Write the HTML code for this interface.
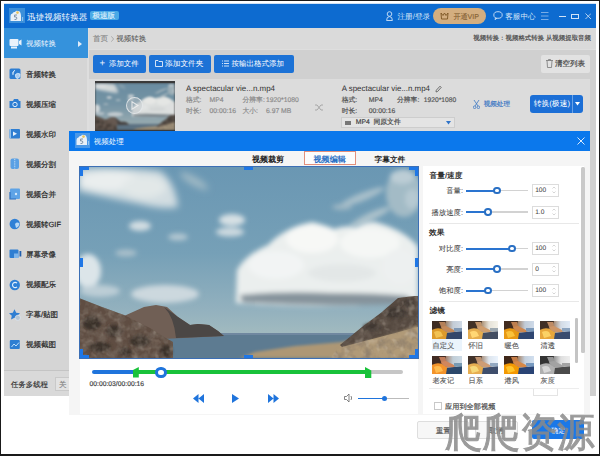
<!DOCTYPE html>
<html><head><meta charset="utf-8">
<style>
*{margin:0;padding:0;box-sizing:border-box}
html,body{width:600px;height:456px;overflow:hidden;background:#fff}
body{position:relative;font-family:"Liberation Sans",sans-serif;color:#333;text-rendering:geometricPrecision}
.a{position:absolute;white-space:nowrap;-webkit-text-stroke:0.18px currentColor}
.hd{background:#1f77e6;position:absolute}
</style></head><body>
<div class="a" style="left:0;top:0;width:600px;height:456px;border:1px solid #1a1a1a;border-bottom-width:2px"></div>

<div class="a" style="left:4px;top:2.8px;width:592px;height:1.2px;background:#d2e2f4;"></div>
<div class="a" style="left:4px;top:4px;width:592px;height:23.5px;background:#0d6bd0;"></div>
<div class="a" style="left:4px;top:27.5px;width:592px;height:1.5px;background:#c9d8ea;"></div>
<div class="a" style="left:4px;top:28px;width:84px;height:368px;background:#d5d5d5;"></div>
<div class="a" style="left:87px;top:28px;width:2px;height:368px;background:#dedede;"></div>
<div class="a" style="left:89px;top:28px;width:507px;height:21px;background:#dadada;"></div>
<div class="a" style="left:89px;top:49px;width:507px;height:1px;background:#dedede;"></div>
<div class="a" style="left:89px;top:50px;width:507px;height:346px;background:#d0d0d0;"></div>
<div class="a" style="left:89px;top:79px;width:501px;height:317px;background:#dcdcdc;"></div>

<div class="a" style="left:9px;top:8px;width:16px;height:14.5px;background:#3c8fd9"></div>
<svg class="a" style="left:10px;top:10px" width="14" height="12" viewBox="0 0 14 12"><path d="M0.5 11 V6 Q0.5 3.5 2.5 3.5 Q3 1.5 5 2 Q6 0.3 8 1 Q10 0.8 10.5 3 Q11 5 11 6 V11 Z" fill="#e8f0f8"/><circle cx="7.5" cy="2.6" r="1.3" fill="#e9c35a"/><path d="M4.5 5 H7 M4.7 5 L4.5 7 Q6.5 6.3 7 8 Q6.8 10 4.5 9.5" fill="none" stroke="#6a7f96" stroke-width="0.8"/><rect x="12.2" y="7" width="0.9" height="4" fill="#a9d0f0"/></svg>

<div class="a" style="left:27px;top:11.20px;font-size:8.64px;line-height:12px;color:#f4f8fd;-webkit-text-stroke:0">迅捷视频转换器</div>
<div class="a" style="left:90px;top:11px;width:28.5px;height:9px;background:#4aa9e6;border-radius:2px"></div>
<div class="a" style="left:92.5px;top:10.20px;font-size:7.5px;line-height:12px;color:#d8ecfa;">极速版</div>
<svg class="a" style="left:386px;top:11px" width="7" height="10" viewBox="0 0 7 10"><circle cx="3.5" cy="3" r="2.3" fill="none" stroke="#cfe2f7" stroke-width="0.9"/><path d="M0.6 9.5 Q0.6 5.6 3.5 5.6 Q6.4 5.6 6.4 9.5 Z" fill="none" stroke="#cfe2f7" stroke-width="0.9"/></svg>
<div class="a" style="left:397.4px;top:10.70px;font-size:7.7px;line-height:12px;color:#d5e6f8;-webkit-text-stroke:0">注册/登录</div>
<div class="a" style="left:433px;top:8px;width:53px;height:16px;background:#d3ae80;border-radius:8px"></div>
<svg class="a" style="left:440px;top:12px" width="9" height="8" viewBox="0 0 9 8"><path d="M1 1 L3 3.5 L4.5 1 L6 3.5 L8 1 L7.5 7 L1.5 7 Z" fill="none" stroke="#7a5522" stroke-width="0.9"/></svg>
<div class="a" style="left:453.4px;top:10.70px;font-size:7.1px;line-height:12px;color:#845f33;-webkit-text-stroke:0.1px #845f33">开通VIP</div>
<svg class="a" style="left:493px;top:11px" width="10" height="9" viewBox="0 0 10 9"><ellipse cx="5" cy="4" rx="4.2" ry="3.3" fill="none" stroke="#cfe2f7" stroke-width="0.9"/><path d="M2.5 7 L2 8.6 L4 7.2" fill="none" stroke="#cfe2f7" stroke-width="0.9"/></svg>
<div class="a" style="left:505.3px;top:10.70px;font-size:7.55px;line-height:12px;color:#d5e6f8;-webkit-text-stroke:0">客服中心</div>
<svg class="a" style="left:541px;top:12px" width="8" height="8" viewBox="0 0 8 8"><path d="M0 0.5 H7.5 M0 4 H7.5 M0 7.5 H7.5" stroke="#a9c9ef" stroke-width="0.7"/></svg>
<div class="a" style="left:558.5px;top:16px;width:7.5px;height:1px;background:#cfe2f7;"></div>
<div class="a" style="left:571px;top:14px;width:8px;height:5px;border:1px solid #cfe2f7"></div>
<svg class="a" style="left:584.5px;top:13px" width="6.5" height="6.5" viewBox="0 0 7 7"><path d="M0.5 0.5 L6.5 6.5 M6.5 0.5 L0.5 6.5" stroke="#cfe2f7" stroke-width="0.9"/></svg>
<div class="a" style="left:4px;top:27.5px;width:83.5px;height:30.5px;background:#3592dc;"></div>
<svg class="a" style="left:9px;top:38px" width="13" height="11" viewBox="0 0 13 11"><rect x="0.5" y="1" width="9" height="7" rx="1" fill="#eaf2fb"/><path d="M10 3 L12.5 1.5 L12.5 7.5 L10 6 Z" fill="#eaf2fb"/><rect x="2" y="8.5" width="6" height="2" fill="#eaf2fb"/></svg>
<div class="a" style="left:26px;top:38.45px;font-size:7.5px;line-height:12px;color:#f2f7fc;-webkit-text-stroke:0">视频转换</div>
<svg class="a" style="left:78px;top:40.5px" width="4" height="6" viewBox="0 0 4 6"><path d="M0 0 L4 3 L0 6 Z" fill="#e0ecf9"/></svg>
<svg class="a" style="left:9px;top:67.85px" width="13" height="12" viewBox="0 0 13 12"><rect x="0.5" y="0.5" width="11" height="10.5" rx="1.5" fill="#2e7ed2"/><path d="M6 2 Q2.5 4 4 7 M6.5 6.5 Q8.5 4.5 11 6 Q11.5 9 9 10.5 Q6.5 10.5 6.5 8 Z" fill="#a9cdf2" stroke="#d8ebfb" stroke-width="0.8"/></svg>
<div class="a" style="left:26px;top:68.55px;font-size:7.5px;line-height:12px;color:#262626;-webkit-text-stroke:0.2px #262626">音频转换</div>
<svg class="a" style="left:9px;top:97.95px" width="13" height="12" viewBox="0 0 13 12"><path d="M0.5 3 H4 L5 1 H9 L10 3 H11.5 V10 H0.5 Z" fill="#2e7ed2"/><circle cx="6" cy="6.5" r="2.2" fill="none" stroke="#e0eefb" stroke-width="1"/></svg>
<div class="a" style="left:26px;top:98.65px;font-size:7.5px;line-height:12px;color:#262626;-webkit-text-stroke:0.2px #262626">视频压缩</div>
<svg class="a" style="left:9px;top:128.05px" width="13" height="12" viewBox="0 0 13 12"><rect x="0.5" y="1" width="10.5" height="9.5" rx="1" fill="#2e7ed2"/><path d="M4 3.5 L8 5.75 L4 8 Z" fill="#e6f1fc"/><rect x="0.5" y="1" width="1.5" height="9.5" fill="#8ec0ee"/></svg>
<div class="a" style="left:26px;top:128.75px;font-size:7.5px;line-height:12px;color:#262626;-webkit-text-stroke:0.2px #262626">视频水印</div>
<svg class="a" style="left:9px;top:158.15px" width="13" height="12" viewBox="0 0 13 12"><rect x="1.5" y="0.5" width="8.5" height="10.5" rx="2" fill="#5aa0e4"/><path d="M5.75 1 V10.5" stroke="#e6f1fc" stroke-width="0.8" stroke-dasharray="1.2 1"/></svg>
<div class="a" style="left:26px;top:158.85px;font-size:7.5px;line-height:12px;color:#262626;-webkit-text-stroke:0.2px #262626">视频分割</div>
<svg class="a" style="left:9px;top:188.25px" width="13" height="12" viewBox="0 0 13 12"><rect x="1" y="0.5" width="10" height="10.5" rx="1" fill="#5ea3e6"/><path d="M1 4 V11 H7" fill="none" stroke="#2a6fc0" stroke-width="1.2"/><circle cx="7" cy="6" r="1.2" fill="#d6e9fb"/></svg>
<div class="a" style="left:26px;top:188.95px;font-size:7.5px;line-height:12px;color:#262626;-webkit-text-stroke:0.2px #262626">视频合并</div>
<svg class="a" style="left:9px;top:218.35px" width="13" height="12" viewBox="0 0 13 12"><circle cx="5.75" cy="6" r="5.2" fill="#2f80d6"/><path d="M6 6 Q8 3.5 10.5 5.5 Q10 9 7 10 Z" fill="#b7d8f6"/></svg>
<div class="a" style="left:26px;top:219.05px;font-size:7.5px;line-height:12px;color:#262626;-webkit-text-stroke:0.2px #262626">视频转GIF</div>
<svg class="a" style="left:9px;top:248.45px" width="13" height="12" viewBox="0 0 13 12"><rect x="0.5" y="1.5" width="9" height="8.5" rx="1" fill="#2e7ed2"/><rect x="10.5" y="3" width="1.8" height="5.5" fill="#1f5fae"/><rect x="5" y="5.5" width="4.5" height="4.5" fill="#7fb6ec"/></svg>
<div class="a" style="left:26px;top:249.15px;font-size:7.5px;line-height:12px;color:#262626;-webkit-text-stroke:0.2px #262626">屏幕录像</div>
<svg class="a" style="left:9px;top:278.55px" width="13" height="12" viewBox="0 0 13 12"><circle cx="5.75" cy="6" r="5.2" fill="#2f80d6"/><path d="M8 4.2 A2.6 2.6 0 1 0 8 7.8" fill="none" stroke="#e4f0fc" stroke-width="1.1"/></svg>
<div class="a" style="left:26px;top:279.25px;font-size:7.5px;line-height:12px;color:#262626;-webkit-text-stroke:0.2px #262626">视频配乐</div>
<svg class="a" style="left:9px;top:308.65px" width="13" height="12" viewBox="0 0 13 12"><path d="M5.5 0.3 L7.2 3.8 L11 4.2 L8.2 6.8 L9 10.6 L5.5 8.7 L2 10.6 L2.8 6.8 L0 4.2 L3.8 3.8 Z" fill="#2e7ed2"/><circle cx="8.8" cy="8.8" r="2.6" fill="#b4c6d6" stroke="#e6eef6" stroke-width="0.6"/></svg>
<div class="a" style="left:26px;top:309.35px;font-size:7.5px;line-height:12px;color:#262626;-webkit-text-stroke:0.2px #262626">字幕/贴图</div>
<svg class="a" style="left:9px;top:338.75px" width="13" height="12" viewBox="0 0 13 12"><rect x="0.8" y="1" width="10" height="9" rx="1" fill="#2e7ed2"/><path d="M2.5 8 L5 5 L7 7 L10 3.5" fill="none" stroke="#bfe0fb" stroke-width="1"/></svg>
<div class="a" style="left:26px;top:339.45px;font-size:7.5px;line-height:12px;color:#262626;-webkit-text-stroke:0.2px #262626">视频截图</div>
<div class="a" style="left:4px;top:371px;width:83px;height:25px;background:#d9d9d9;"></div>
<div class="a" style="left:4px;top:370px;width:83px;height:1px;background:#c4c4c4;"></div>
<div class="a" style="left:11px;top:378.70px;font-size:7.4px;line-height:12px;color:#333;-webkit-text-stroke:0.15px #333">任务多线程</div>
<div class="a" style="left:55px;top:377px;width:30px;height:14px;background:#e2e2e2;border:1px solid #c9c9c9"></div>
<div class="a" style="left:59px;top:378.70px;font-size:7.4px;line-height:12px;color:#888;">关</div>
<div class="a" style="left:93px;top:33.20px;font-size:7.5px;line-height:12px;color:#8a8a8a;">首页</div>
<svg class="a" style="left:110.5px;top:35.5px" width="3" height="6" viewBox="0 0 3 6"><path d="M0.3 0.3 L2.6 3 L0.3 5.7" fill="none" stroke="#999" stroke-width="0.7"/></svg>
<div class="a" style="left:116.25px;top:33.20px;font-size:7.5px;line-height:12px;color:#555;-webkit-text-stroke:0.05px #555">视频转换</div>
<div class="a" style="right:9px;top:33.45px;font-size:6.45px;line-height:12px;color:#444;">视频转换：视频格式转换 从视频提取音频</div>
<div class="a" style="left:93px;top:54.5px;width:53px;height:18.5px;background:#1c72d6;border-radius:2px"></div>
<div class="a" style="left:99.5px;top:57.90px;font-size:9.5px;line-height:12px;color:#eef5fd;-webkit-text-stroke:0">+</div>
<div class="a" style="left:109px;top:58.45px;font-size:7.4px;line-height:12px;color:#fff;-webkit-text-stroke:0">添加文件</div>
<div class="a" style="left:149.25px;top:54.5px;width:61.25px;height:18.5px;background:#1c72d6;border-radius:2px"></div>
<svg class="a" style="left:155px;top:60px" width="8" height="7" viewBox="0 0 8 7"><path d="M0.5 0.5 H3 L4 1.5 H7.5 V6.5 H0.5 Z" fill="none" stroke="#fff" stroke-width="0.8"/></svg>
<div class="a" style="left:165px;top:58.45px;font-size:7.7px;line-height:12px;color:#fff;-webkit-text-stroke:0">添加文件夹</div>
<div class="a" style="left:214px;top:54.5px;width:79.5px;height:18.5px;background:#1c72d6;border-radius:2px"></div>
<svg class="a" style="left:222px;top:60px" width="7" height="7" viewBox="0 0 7 7"><path d="M0 1 H1 M2 1 H7 M0 3.5 H1 M2 3.5 H7 M0 6 H1 M2 6 H7" stroke="#fff" stroke-width="0.8"/></svg>
<div class="a" style="left:231.5px;top:58.45px;font-size:7.5px;line-height:12px;color:#fff;-webkit-text-stroke:0">按输出格式添加</div>
<div class="a" style="left:541px;top:55px;width:49px;height:17.5px;background:#e2e2e2;border-radius:2px"></div>
<svg class="a" style="left:546px;top:59px" width="7" height="9" viewBox="0 0 7 9"><path d="M0 1.5 H7 M2.5 1.5 V0.5 H4.5 V1.5 M1 1.5 L1.5 8.5 H5.5 L6 1.5" fill="none" stroke="#777" stroke-width="0.8"/></svg>
<div class="a" style="left:555px;top:58.45px;font-size:7.5px;line-height:12px;color:#444;">清空列表</div>
<div class="a" style="left:95px;top:81px;width:80px;height:50px;background:#3a3a3a;"></div>
<div class="a" style="left:95px;top:83px;width:80px;height:47px;overflow:hidden"><div style="position:absolute;left:0;top:0;width:80px;height:47px;filter:saturate(.8) brightness(.93) blur(0.8px)"><svg style="position:absolute;left:0;top:0" width="80" height="47" preserveAspectRatio="none" viewBox="0 0 338 191">
<defs>
<linearGradient id="sky2" x1="0" y1="0" x2="0" y2="1">
<stop offset="0" stop-color="#6a97b3"/><stop offset="0.45" stop-color="#76a0b7"/><stop offset="0.75" stop-color="#93b1be"/><stop offset="0.87" stop-color="#a1babf"/><stop offset="1" stop-color="#a1babf"/>
</linearGradient>
<filter id="tb3" x="-30%" y="-30%" width="160%" height="160%"><feGaussianBlur stdDeviation="2.5"/></filter>
<filter id="tb2" x="-30%" y="-30%" width="160%" height="160%"><feGaussianBlur stdDeviation="1.4"/></filter>
<filter id="tb1" x="-30%" y="-30%" width="160%" height="160%"><feGaussianBlur stdDeviation="0.7"/></filter>
<filter id="trough" x="0" y="0" width="100%" height="100%"><feTurbulence type="fractalNoise" baseFrequency="0.11" numOctaves="3" seed="4"/><feColorMatrix values="0 0 0 0 0.2  0 0 0 0 0.16  0 0 0 0 0.13  0 0 0 -2.2 1.35"/></filter>
<filter id="trough2" x="0" y="0" width="100%" height="100%"><feTurbulence type="fractalNoise" baseFrequency="0.14" numOctaves="2" seed="9"/><feColorMatrix values="0 0 0 0 0.75  0 0 0 0 0.68  0 0 0 0 0.58  0 0 0 -2.5 1.2"/></filter>
<clipPath id="tcliffclip"><path d="M-1 131 L22 140 L44 148 L70 161 L84 170 L93 175 L93 191 L-1 191 Z"/></clipPath>
<clipPath id="thillclip"><path d="M250 191 L260 178 L282 160 L302 145 L322 130 L338 129 L338 191 Z"/></clipPath>
</defs>
<rect width="338" height="191" fill="url(#sky2)"/>
<!-- top-left cloud -->
<filter id="tb4" x="-30%" y="-30%" width="160%" height="160%"><feGaussianBlur stdDeviation="3.5"/></filter>
<g filter="url(#tb4)">
<path d="M-2 1 Q40 -1 80 4 Q95 14 98 40 Q84 43 60 37 Q30 31 -2 24 Z" fill="#d2dde1"/>
<ellipse cx="30" cy="14" rx="32" ry="10" fill="#eaeeee"/>
<ellipse cx="64" cy="20" rx="22" ry="11" fill="#e2e8e8"/>
<ellipse cx="114" cy="14" rx="16" ry="4" transform="rotate(30 114 14)" fill="#a3bbc6"/>
</g>
<!-- small clouds -->
<g filter="url(#tb3)">
<ellipse cx="60" cy="59" rx="11" ry="5" fill="#d2dde2"/>
<ellipse cx="152" cy="53" rx="13" ry="6" fill="#d6e0e4"/>
<ellipse cx="150" cy="65" rx="14" ry="4.5" fill="#cddae0"/>
<ellipse cx="98" cy="70" rx="10" ry="3.5" fill="#b4c8d2"/>
<ellipse cx="46" cy="86" rx="11" ry="3.5" fill="#aac0cb"/>
</g>
<!-- top-right wisps -->
<g filter="url(#tb3)">
<ellipse cx="324" cy="26" rx="18" ry="24" fill="#a3bbc6"/>
<ellipse cx="322" cy="10" rx="12" ry="7" fill="#bccdd5"/>
<ellipse cx="332" cy="32" rx="7" ry="10" fill="#b6c9d2"/>
<ellipse cx="282" cy="30" rx="24" ry="4" transform="rotate(-22 282 30)" fill="#a8bfca"/>
<ellipse cx="290" cy="50" rx="22" ry="4" transform="rotate(-25 290 50)" fill="#abc1cb"/>
<ellipse cx="262" cy="40" rx="10" ry="3" fill="#9fb8c4"/>
</g>
<!-- big cloud -->
<g filter="url(#tb3)">
<path d="M156 136 L157 103 Q165 88 188 78 Q205 60 232 55 Q245 58 254 62 Q265 58 276 60 Q290 52 299 56 Q320 62 334 75 L338 80 L338 132 Q300 139 250 139 Q200 139 156 136 Z" fill="#ebefee"/>
<ellipse cx="232" cy="72" rx="26" ry="14" fill="#f7f8f6"/>
<ellipse cx="290" cy="76" rx="30" ry="15" fill="#f5f7f5"/>
<ellipse cx="196" cy="98" rx="28" ry="14" fill="#f2f4f4"/>
<ellipse cx="320" cy="100" rx="18" ry="18" fill="#edf0f0"/>
<ellipse cx="262" cy="106" rx="34" ry="9" fill="#e3e7e7"/>
<path d="M160 128 Q200 124 250 126 Q300 126 328 129 L332 136 Q280 139 240 138 Q190 137 162 135 Z" fill="#85939b"/>
</g>
<!-- left clouds -->
<g filter="url(#tb3)">
<ellipse cx="8" cy="104" rx="13" ry="17" fill="#dce5e9"/>
<ellipse cx="85" cy="127" rx="34" ry="9" fill="#ccd8de"/>
<ellipse cx="20" cy="124" rx="20" ry="6" fill="#bccdd6"/>
</g>
<!-- sea -->
<rect x="0" y="166.5" width="338" height="25" fill="#5d7b91"/>
<rect x="0" y="166" width="338" height="2" fill="#7088a0" filter="url(#tb1)"/>
<!-- ridge -->
<path d="M20 165 L44 149 L64 140 L76 138 L87 140 L98 150 L110 158 L118 157 L129 158 L138 164 L144 169 L20 175 Z" fill="#6f5e54" filter="url(#tb1)"/>
<path d="M84 140 L98 150 L110 158 L118 157 L129 158 L138 164 L144 169 L96 171 Q94 150 84 140 Z" fill="#4b4644" filter="url(#tb1)"/>
<!-- grass bottom right -->
<path d="M160 191 L175 185 L215 179 L262 175 L300 165 L338 156 L338 191 Z" fill="#ad9775" filter="url(#tb2)"/>
<!-- right hill -->
<path d="M260 178 L282 160 L302 145 L318 131 L335 129 L338 129 L338 160 L300 170 L262 180 Z" fill="#54483f" filter="url(#tb1)"/>
<g fill="#3f3731" filter="url(#tb2)"><ellipse cx="316" cy="146" rx="11" ry="6"/><ellipse cx="292" cy="160" rx="9" ry="4"/><ellipse cx="328" cy="136" rx="6" ry="4"/></g>

<path d="M250 191 L262 181 L290 174 L320 165 L338 158 L338 191 Z" fill="#b09a78" filter="url(#tb2)"/>
<!-- left cliff -->
<path d="M-1 131 L22 140 L44 148 L70 161 L84 170 L93 175 L93 191 L-1 191 Z" fill="#5f4e42" filter="url(#tb1)"/>
<g fill="#3a302a" filter="url(#tb2)">
<ellipse cx="12" cy="156" rx="9" ry="7"/><ellipse cx="34" cy="164" rx="8" ry="6"/>
<ellipse cx="60" cy="174" rx="10" ry="6"/><ellipse cx="20" cy="180" rx="11" ry="5"/>
<ellipse cx="86" cy="184" rx="6" ry="6"/><ellipse cx="45" cy="185" rx="7" ry="4"/>
</g>

<g clip-path="url(#tcliffclip)"><rect x="0" y="128" width="95" height="63" filter="url(#trough)" opacity=".8"/><rect x="0" y="128" width="95" height="63" filter="url(#trough2)" opacity=".3"/></g>
<g clip-path="url(#thillclip)"><rect x="248" y="126" width="90" height="65" filter="url(#trough)" opacity=".55"/><rect x="248" y="126" width="90" height="65" filter="url(#trough2)" opacity=".4"/></g>
</svg>
</div></div>

<div class="a" style="left:126px;top:97px;width:17px;height:17px;border-radius:50%;background:rgba(190,198,202,.45);border:1.5px solid rgba(232,235,238,.8)"></div>
<svg class="a" style="left:131px;top:101px" width="8" height="9" viewBox="0 0 8 9"><path d="M1 0.8 L7 4.5 L1 8.2 Z" fill="none" stroke="rgba(240,240,240,.85)" stroke-width="1.1"/></svg>

<div class="a" style="left:186px;top:82.70px;font-size:7.97px;line-height:12px;color:#333;-webkit-text-stroke:0">A spectacular vie...n.mp4</div>
<div class="a" style="left:186px;top:95.20px;font-size:6.8px;line-height:12px;color:#8c8c8c;">格式:</div>
<div class="a" style="left:209.5px;top:95.20px;font-size:6.8px;line-height:12px;color:#8c8c8c;">MP4</div>
<div class="a" style="left:242.5px;top:95.20px;font-size:6.8px;line-height:12px;color:#8c8c8c;">分辨率:</div>
<div class="a" style="left:266px;top:95.20px;font-size:6.77px;line-height:12px;color:#8c8c8c;">1920*1080</div>
<div class="a" style="left:186px;top:105.70px;font-size:6.8px;line-height:12px;color:#8c8c8c;">时长:</div>
<div class="a" style="left:209.5px;top:105.70px;font-size:6.8px;line-height:12px;color:#8c8c8c;">00:00:16</div>
<div class="a" style="left:242.5px;top:105.70px;font-size:6.8px;line-height:12px;color:#8c8c8c;">大小:</div>
<div class="a" style="left:266px;top:105.70px;font-size:6.8px;line-height:12px;color:#8c8c8c;">6.97 MB</div>
<svg class="a" style="left:315px;top:103.5px" width="8" height="7" viewBox="0 0 8 7"><path d="M0 1 H2 L6 6 H8 M0 6 H2 L6 1 H8" fill="none" stroke="#999" stroke-width="0.8"/></svg>
<div class="a" style="left:341.75px;top:83.45px;font-size:7.9px;line-height:12px;color:#333;-webkit-text-stroke:0">A spectacular vie...n.mp4</div>
<svg class="a" style="left:435px;top:85px" width="7" height="8" viewBox="0 0 7 8"><path d="M1 7 L1.3 5.2 L5 1.2 L6.2 2.4 L2.6 6.5 Z" fill="none" stroke="#555" stroke-width="0.8"/></svg>
<div class="a" style="left:341.75px;top:95.45px;font-size:6.8px;line-height:12px;color:#555;">格式:</div>
<div class="a" style="left:368.75px;top:95.45px;font-size:6.8px;line-height:12px;color:#555;">MP4</div>
<div class="a" style="left:397px;top:95.45px;font-size:6.8px;line-height:12px;color:#555;">分辨率:</div>
<div class="a" style="left:423.75px;top:95.45px;font-size:6.7px;line-height:12px;color:#555;">1920*1080</div>
<div class="a" style="left:341.75px;top:106.20px;font-size:6.8px;line-height:12px;color:#555;">时长:</div>
<div class="a" style="left:368.75px;top:106.20px;font-size:6.8px;line-height:12px;color:#555;">00:00:16</div>
<div class="a" style="left:341px;top:117px;width:114px;height:11px;border:1px solid #cdcdcd;background:#e4e4e4"></div>
<div class="a" style="left:345px;top:120.5px;width:6px;height:4px;background:#777;"></div>
<div class="a" style="left:355.75px;top:117.20px;font-size:6.8px;line-height:12px;color:#444;">MP4 &nbsp;同原文件</div>
<svg class="a" style="left:446px;top:121px" width="5" height="4" viewBox="0 0 5 4"><path d="M0 0 H5 L2.5 3.5 Z" fill="#2f73c8"/></svg>
<svg class="a" style="left:473px;top:100px" width="7" height="9" viewBox="0 0 7 9"><path d="M1 0 L5 6 M6 0 L2 6" stroke="#3e78c4" stroke-width="0.8"/><circle cx="1.6" cy="7.3" r="1.3" fill="none" stroke="#3e78c4" stroke-width="0.8"/><circle cx="5.4" cy="7.3" r="1.3" fill="none" stroke="#3e78c4" stroke-width="0.8"/></svg>
<div class="a" style="left:483.75px;top:98.70px;font-size:6.56px;line-height:12px;color:#3e78c4;">视频处理</div>
<div class="a" style="left:530px;top:95px;width:52.5px;height:17.5px;background:#1c6fd6;border-radius:3px"></div>
<div class="a" style="left:572px;top:95px;width:1px;height:17.5px;background:#6aa2e6;"></div>
<div class="a" style="left:533.75px;top:98.45px;font-size:7.77px;line-height:12px;color:#fff;-webkit-text-stroke:0">转换(极速)</div>
<svg class="a" style="left:575px;top:102px" width="5" height="4" viewBox="0 0 5 4"><path d="M0 0 H5 L2.5 3.5 Z" fill="#fff"/></svg>
<div class="a" style="left:69px;top:131px;width:521px;height:19.5px;background:#0b78ec;"></div>
<div class="a" style="left:74.5px;top:132.5px;width:15px;height:15px;background:#4a98e8;"></div>
<svg class="a" style="left:75.5px;top:134px" width="14" height="12" viewBox="0 0 14 12"><path d="M0.5 11 V6 Q0.5 3.5 2.5 3.5 Q3 1.5 5 2 Q6 0.3 8 1 Q10 0.8 10.5 3 Q11 5 11 6 V11 Z" fill="#e8f0f8"/><circle cx="7.5" cy="2.6" r="1.3" fill="#e9c35a"/><path d="M4.5 5 H7 M4.7 5 L4.5 7 Q6.5 6.3 7 8 Q6.8 10 4.5 9.5" fill="none" stroke="#6a7f96" stroke-width="0.8"/><rect x="12.2" y="7" width="0.9" height="4" fill="#a9d0f0"/></svg>
<div class="a" style="left:93.75px;top:136.20px;font-size:7.5px;line-height:12px;color:#f4f8fd;-webkit-text-stroke:0">视频处理</div>
<svg class="a" style="left:577px;top:136.5px" width="8" height="8" viewBox="0 0 8 8"><path d="M0.5 0.5 L7.5 7.5 M7.5 0.5 L0.5 7.5" stroke="#d9e9fb" stroke-width="1"/></svg>
<div class="a" style="left:69px;top:150.5px;width:521px;height:264.5px;background:#f5f5f5;"></div>
<div class="a" style="left:80px;top:166px;width:338px;height:248px;background:#fff;"></div>
<div class="a" style="left:423px;top:166px;width:161px;height:248px;background:#fff;"></div>
<div class="a" style="left:252px;top:154.10px;font-size:8px;line-height:12px;color:#222;font-weight:bold;-webkit-text-stroke:0">视频裁剪</div>
<div class="a" style="left:303.75px;top:151.25px;width:52.5px;height:14px;border:1px solid #e3907c;background:#fcfcfc"></div>
<div class="a" style="left:313.5px;top:154.10px;font-size:8.1px;line-height:12px;color:#2a6fc4;font-weight:bold;-webkit-text-stroke:0">视频编辑</div>
<div class="a" style="left:374.5px;top:154.10px;font-size:7.7px;line-height:12px;color:#222;font-weight:bold;-webkit-text-stroke:0">字幕文件</div>
<div class="a" style="left:79px;top:166px;width:340px;height:193px;border:1px solid #3c6fb5"></div>
<svg class="a" style="left:80px;top:167px" width="338" height="191" viewBox="0 0 338 191">
<defs>
<linearGradient id="sky" x1="0" y1="0" x2="0" y2="1">
<stop offset="0" stop-color="#6a97b3"/><stop offset="0.45" stop-color="#76a0b7"/><stop offset="0.75" stop-color="#93b1be"/><stop offset="0.87" stop-color="#a1babf"/><stop offset="1" stop-color="#a1babf"/>
</linearGradient>
<filter id="b3" x="-30%" y="-30%" width="160%" height="160%"><feGaussianBlur stdDeviation="2.5"/></filter>
<filter id="b2" x="-30%" y="-30%" width="160%" height="160%"><feGaussianBlur stdDeviation="1.4"/></filter>
<filter id="b1" x="-30%" y="-30%" width="160%" height="160%"><feGaussianBlur stdDeviation="0.7"/></filter>
<filter id="rough" x="0" y="0" width="100%" height="100%"><feTurbulence type="fractalNoise" baseFrequency="0.11" numOctaves="3" seed="4"/><feColorMatrix values="0 0 0 0 0.2  0 0 0 0 0.16  0 0 0 0 0.13  0 0 0 -2.2 1.35"/></filter>
<filter id="rough2" x="0" y="0" width="100%" height="100%"><feTurbulence type="fractalNoise" baseFrequency="0.14" numOctaves="2" seed="9"/><feColorMatrix values="0 0 0 0 0.75  0 0 0 0 0.68  0 0 0 0 0.58  0 0 0 -2.5 1.2"/></filter>
<clipPath id="cliffclip"><path d="M-1 131 L22 140 L44 148 L70 161 L84 170 L93 175 L93 191 L-1 191 Z"/></clipPath>
<clipPath id="hillclip"><path d="M250 191 L260 178 L282 160 L302 145 L322 130 L338 129 L338 191 Z"/></clipPath>
</defs>
<rect width="338" height="191" fill="url(#sky)"/>
<!-- top-left cloud -->
<filter id="b4" x="-30%" y="-30%" width="160%" height="160%"><feGaussianBlur stdDeviation="3.5"/></filter>
<g filter="url(#b4)">
<path d="M-2 1 Q40 -1 80 4 Q95 14 98 40 Q84 43 60 37 Q30 31 -2 24 Z" fill="#d2dde1"/>
<ellipse cx="30" cy="14" rx="32" ry="10" fill="#eaeeee"/>
<ellipse cx="64" cy="20" rx="22" ry="11" fill="#e2e8e8"/>
<ellipse cx="114" cy="14" rx="16" ry="4" transform="rotate(30 114 14)" fill="#a3bbc6"/>
</g>
<!-- small clouds -->
<g filter="url(#b3)">
<ellipse cx="60" cy="59" rx="11" ry="5" fill="#d2dde2"/>
<ellipse cx="152" cy="53" rx="13" ry="6" fill="#d6e0e4"/>
<ellipse cx="150" cy="65" rx="14" ry="4.5" fill="#cddae0"/>
<ellipse cx="98" cy="70" rx="10" ry="3.5" fill="#b4c8d2"/>
<ellipse cx="46" cy="86" rx="11" ry="3.5" fill="#aac0cb"/>
</g>
<!-- top-right wisps -->
<g filter="url(#b3)">
<ellipse cx="324" cy="26" rx="18" ry="24" fill="#a3bbc6"/>
<ellipse cx="322" cy="10" rx="12" ry="7" fill="#bccdd5"/>
<ellipse cx="332" cy="32" rx="7" ry="10" fill="#b6c9d2"/>
<ellipse cx="282" cy="30" rx="24" ry="4" transform="rotate(-22 282 30)" fill="#a8bfca"/>
<ellipse cx="290" cy="50" rx="22" ry="4" transform="rotate(-25 290 50)" fill="#abc1cb"/>
<ellipse cx="262" cy="40" rx="10" ry="3" fill="#9fb8c4"/>
</g>
<!-- big cloud -->
<g filter="url(#b3)">
<path d="M156 136 L157 103 Q165 88 188 78 Q205 60 232 55 Q245 58 254 62 Q265 58 276 60 Q290 52 299 56 Q320 62 334 75 L338 80 L338 132 Q300 139 250 139 Q200 139 156 136 Z" fill="#ebefee"/>
<ellipse cx="232" cy="72" rx="26" ry="14" fill="#f7f8f6"/>
<ellipse cx="290" cy="76" rx="30" ry="15" fill="#f5f7f5"/>
<ellipse cx="196" cy="98" rx="28" ry="14" fill="#f2f4f4"/>
<ellipse cx="320" cy="100" rx="18" ry="18" fill="#edf0f0"/>
<ellipse cx="262" cy="106" rx="34" ry="9" fill="#e3e7e7"/>
<path d="M160 128 Q200 124 250 126 Q300 126 328 129 L332 136 Q280 139 240 138 Q190 137 162 135 Z" fill="#85939b"/>
</g>
<!-- left clouds -->
<g filter="url(#b3)">
<ellipse cx="8" cy="104" rx="13" ry="17" fill="#dce5e9"/>
<ellipse cx="85" cy="127" rx="34" ry="9" fill="#ccd8de"/>
<ellipse cx="20" cy="124" rx="20" ry="6" fill="#bccdd6"/>
</g>
<!-- sea -->
<rect x="0" y="166.5" width="338" height="25" fill="#5d7b91"/>
<rect x="0" y="166" width="338" height="2" fill="#7088a0" filter="url(#b1)"/>
<!-- ridge -->
<path d="M20 165 L44 149 L64 140 L76 138 L87 140 L98 150 L110 158 L118 157 L129 158 L138 164 L144 169 L20 175 Z" fill="#6f5e54" filter="url(#b1)"/>
<path d="M84 140 L98 150 L110 158 L118 157 L129 158 L138 164 L144 169 L96 171 Q94 150 84 140 Z" fill="#4b4644" filter="url(#b1)"/>
<!-- grass bottom right -->
<path d="M160 191 L175 185 L215 179 L262 175 L300 165 L338 156 L338 191 Z" fill="#ad9775" filter="url(#b2)"/>
<!-- right hill -->
<path d="M260 178 L282 160 L302 145 L318 131 L335 129 L338 129 L338 160 L300 170 L262 180 Z" fill="#54483f" filter="url(#b1)"/>
<g fill="#3f3731" filter="url(#b2)"><ellipse cx="316" cy="146" rx="11" ry="6"/><ellipse cx="292" cy="160" rx="9" ry="4"/><ellipse cx="328" cy="136" rx="6" ry="4"/></g>

<path d="M250 191 L262 181 L290 174 L320 165 L338 158 L338 191 Z" fill="#b09a78" filter="url(#b2)"/>
<!-- left cliff -->
<path d="M-1 131 L22 140 L44 148 L70 161 L84 170 L93 175 L93 191 L-1 191 Z" fill="#5f4e42" filter="url(#b1)"/>
<g fill="#3a302a" filter="url(#b2)">
<ellipse cx="12" cy="156" rx="9" ry="7"/><ellipse cx="34" cy="164" rx="8" ry="6"/>
<ellipse cx="60" cy="174" rx="10" ry="6"/><ellipse cx="20" cy="180" rx="11" ry="5"/>
<ellipse cx="86" cy="184" rx="6" ry="6"/><ellipse cx="45" cy="185" rx="7" ry="4"/>
</g>

<g clip-path="url(#cliffclip)"><rect x="0" y="128" width="95" height="63" filter="url(#rough)" opacity=".8"/><rect x="0" y="128" width="95" height="63" filter="url(#rough2)" opacity=".3"/></g>
<g clip-path="url(#hillclip)"><rect x="248" y="126" width="90" height="65" filter="url(#rough)" opacity=".55"/><rect x="248" y="126" width="90" height="65" filter="url(#rough2)" opacity=".4"/></g>
</svg>

<div class="hd" style="left:80px;top:167px;width:9px;height:3px"></div>
<div class="hd" style="left:80px;top:167px;width:3px;height:9px"></div>
<div class="hd" style="left:409px;top:167px;width:9px;height:3px"></div>
<div class="hd" style="left:415px;top:167px;width:3px;height:9px"></div>
<div class="hd" style="left:80px;top:355px;width:9px;height:3px"></div>
<div class="hd" style="left:80px;top:349px;width:3px;height:9px"></div>
<div class="hd" style="left:409px;top:355px;width:9px;height:3px"></div>
<div class="hd" style="left:415px;top:349px;width:3px;height:9px"></div>
<div class="hd" style="left:244px;top:167px;width:9px;height:3px"></div>
<div class="hd" style="left:244px;top:355px;width:9px;height:3px"></div>
<div class="hd" style="left:80px;top:258px;width:3px;height:9px"></div>
<div class="hd" style="left:415px;top:258px;width:3px;height:9px"></div>

<div class="a" style="left:92px;top:370px;width:43px;height:4px;background:#1f74dc;border-radius:2px 0 0 2px"></div>
<div class="a" style="left:137px;top:370px;width:229px;height:4px;background:#19c23a"></div>
<div class="a" style="left:370px;top:370.3px;width:33px;height:3.7px;background:#c6c6c6;border-radius:0 2px 2px 0"></div>
<svg class="a" style="left:133px;top:367px" width="6" height="11" viewBox="0 0 6 11"><path d="M0 3 L5.8 0 L5.8 10.5 L0 10.5 Z" fill="#19c23a"/></svg>
<svg class="a" style="left:365px;top:367px" width="7" height="11" viewBox="0 0 7 11"><path d="M0 0 L6.3 3.5 L6.3 11 L0 11 Z" fill="#19c23a"/></svg>
<div class="a" style="left:155.25px;top:366.5px;width:11.5px;height:11.5px;border-radius:50%;background:#fff;border:3px solid #1f74dc"></div>
<svg class="a" style="left:193px;top:394px" width="11" height="9" viewBox="0 0 11 9"><path d="M5.5 0 L0 4.5 L5.5 9 Z M11 0 L5.5 4.5 L11 9 Z" fill="#1f74dc"/></svg>
<svg class="a" style="left:232px;top:394px" width="7" height="9" viewBox="0 0 7 9"><path d="M0 0 L7 4.5 L0 9 Z" fill="#1f74dc"/></svg>
<svg class="a" style="left:268px;top:394px" width="11" height="9" viewBox="0 0 11 9"><path d="M0 0 L5.5 4.5 L0 9 Z M5.5 0 L11 4.5 L5.5 9 Z" fill="#1f74dc"/></svg>
<svg class="a" style="left:344px;top:393px" width="10" height="10" viewBox="0 0 10 10"><path d="M0.5 3.5 H2.5 L5 1 V9 L2.5 6.5 H0.5 Z" fill="none" stroke="#666" stroke-width="0.8"/><path d="M7 3 Q8.3 5 7 7" fill="none" stroke="#666" stroke-width="0.8"/></svg>
<div class="a" style="left:358px;top:397.5px;width:26px;height:1.5px;background:#1f74dc"></div>
<div class="a" style="left:384px;top:397.5px;width:25px;height:1px;background:#bbb"></div>
<div class="a" style="left:381.5px;top:395.5px;width:5px;height:5px;border-radius:50%;background:#1f74dc"></div>

<div class="a" style="left:89.6px;top:378.70px;font-size:6.75px;line-height:12px;color:#444;">00:00:03/00:00:16</div>
<div class="a" style="left:429.6px;top:169.70px;font-size:7.7px;line-height:12px;color:#333;font-weight:bold;-webkit-text-stroke:0">音量/速度</div>
<div class="a" style="right:137px;top:185.00px;font-size:7.4px;line-height:12px;color:#444;-webkit-text-stroke:0.05px #444">音量:</div><div class="a" style="left:466px;top:189.7px;width:31px;height:2px;background:#2a74d0;"></div><div class="a" style="left:497px;top:189.7px;width:31px;height:1.4px;background:#d2d2d2;"></div><div class="a" style="left:493.25px;top:186.55px;width:7.5px;height:7.5px;border-radius:50%;background:#fff;border:2px solid #2a70c4"></div><div class="a" style="left:532px;top:183.8px;width:27px;height:13px;border:1px solid #dcdcdc;background:#fff"></div><div class="a" style="left:535.2px;top:185.00px;font-size:6.6px;line-height:12px;color:#444;-webkit-text-stroke:0.05px #444">100</div><svg class="a" style="left:552px;top:186.3px" width="4" height="8" viewBox="0 0 4 8"><path d="M0.5 2.5 L2 1 L3.5 2.5 M0.5 5.5 L2 7 L3.5 5.5" fill="none" stroke="#bbb" stroke-width="0.6"/></svg>
<div class="a" style="right:137px;top:206.70px;font-size:7.4px;line-height:12px;color:#444;-webkit-text-stroke:0.05px #444">播放速度:</div><div class="a" style="left:466px;top:211.4px;width:22px;height:2px;background:#2a74d0;"></div><div class="a" style="left:488px;top:211.4px;width:40px;height:1.4px;background:#d2d2d2;"></div><div class="a" style="left:484.25px;top:208.25px;width:7.5px;height:7.5px;border-radius:50%;background:#fff;border:2px solid #2a70c4"></div><div class="a" style="left:532px;top:205.5px;width:27px;height:13px;border:1px solid #dcdcdc;background:#fff"></div><div class="a" style="left:535.2px;top:206.70px;font-size:6.6px;line-height:12px;color:#444;-webkit-text-stroke:0.05px #444">1.0</div><svg class="a" style="left:552px;top:208px" width="4" height="8" viewBox="0 0 4 8"><path d="M0.5 2.5 L2 1 L3.5 2.5 M0.5 5.5 L2 7 L3.5 5.5" fill="none" stroke="#bbb" stroke-width="0.6"/></svg>
<div class="a" style="left:429px;top:222.5px;width:150px;height:1px;background:#e8e8e8;"></div>
<div class="a" style="left:429px;top:226.90px;font-size:7.7px;line-height:12px;color:#333;font-weight:bold;-webkit-text-stroke:0">效果</div>
<div class="a" style="right:137px;top:243.00px;font-size:7.4px;line-height:12px;color:#444;-webkit-text-stroke:0.05px #444">对比度:</div><div class="a" style="left:466px;top:247.7px;width:46px;height:2px;background:#2a74d0;"></div><div class="a" style="left:512px;top:247.7px;width:16px;height:1.4px;background:#d2d2d2;"></div><div class="a" style="left:508.25px;top:244.55px;width:7.5px;height:7.5px;border-radius:50%;background:#fff;border:2px solid #2a70c4"></div><div class="a" style="left:532px;top:241.8px;width:27px;height:13px;border:1px solid #dcdcdc;background:#fff"></div><div class="a" style="left:535.2px;top:243.00px;font-size:6.6px;line-height:12px;color:#444;-webkit-text-stroke:0.05px #444">100</div><svg class="a" style="left:552px;top:244.3px" width="4" height="8" viewBox="0 0 4 8"><path d="M0.5 2.5 L2 1 L3.5 2.5 M0.5 5.5 L2 7 L3.5 5.5" fill="none" stroke="#bbb" stroke-width="0.6"/></svg>
<div class="a" style="right:137px;top:263.70px;font-size:7.4px;line-height:12px;color:#444;-webkit-text-stroke:0.05px #444">亮度:</div><div class="a" style="left:466px;top:268.4px;width:31px;height:2px;background:#2a74d0;"></div><div class="a" style="left:497px;top:268.4px;width:31px;height:1.4px;background:#d2d2d2;"></div><div class="a" style="left:493.25px;top:265.25px;width:7.5px;height:7.5px;border-radius:50%;background:#fff;border:2px solid #2a70c4"></div><div class="a" style="left:532px;top:262.5px;width:27px;height:13px;border:1px solid #dcdcdc;background:#fff"></div><div class="a" style="left:535.2px;top:263.70px;font-size:6.6px;line-height:12px;color:#444;-webkit-text-stroke:0.05px #444">0</div><svg class="a" style="left:552px;top:265px" width="4" height="8" viewBox="0 0 4 8"><path d="M0.5 2.5 L2 1 L3.5 2.5 M0.5 5.5 L2 7 L3.5 5.5" fill="none" stroke="#bbb" stroke-width="0.6"/></svg>
<div class="a" style="right:137px;top:285.20px;font-size:7.4px;line-height:12px;color:#444;-webkit-text-stroke:0.05px #444">饱和度:</div><div class="a" style="left:466px;top:289.9px;width:22px;height:2px;background:#2a74d0;"></div><div class="a" style="left:488px;top:289.9px;width:40px;height:1.4px;background:#d2d2d2;"></div><div class="a" style="left:484.25px;top:286.75px;width:7.5px;height:7.5px;border-radius:50%;background:#fff;border:2px solid #2a70c4"></div><div class="a" style="left:532px;top:284.0px;width:27px;height:13px;border:1px solid #dcdcdc;background:#fff"></div><div class="a" style="left:535.2px;top:285.20px;font-size:6.6px;line-height:12px;color:#444;-webkit-text-stroke:0.05px #444">100</div><svg class="a" style="left:552px;top:286.5px" width="4" height="8" viewBox="0 0 4 8"><path d="M0.5 2.5 L2 1 L3.5 2.5 M0.5 5.5 L2 7 L3.5 5.5" fill="none" stroke="#bbb" stroke-width="0.6"/></svg>
<div class="a" style="left:429px;top:301px;width:150px;height:1px;background:#e8e8e8;"></div>
<div class="a" style="left:429.5px;top:304.70px;font-size:7.7px;line-height:12px;color:#333;font-weight:bold;-webkit-text-stroke:0">滤镜</div>
<div class="a" style="left:581px;top:167px;width:3.5px;height:186px;background:#c9c9c9;border-radius:1.5px"></div>
<div class="a" style="left:575px;top:318px;width:2.5px;height:45px;background:#c4c4c4;border-radius:1.2px"></div>
<div class="a" style="left:432px;top:339px;width:30px;height:12px;background:#ebf4fc;"></div>
<svg class="a" style="left:432px;top:321px;filter:none" width="30" height="18" viewBox="0 0 30 18"><defs><linearGradient id="fg0" x1="0" y1="0" x2="1" y2="0"><stop offset="0" stop-color="#5a3f2c"/><stop offset="0.45" stop-color="#9b7e66"/><stop offset="0.7" stop-color="#c3ccd6"/><stop offset="1" stop-color="#d0dae6"/></linearGradient></defs><rect width="30" height="18" fill="url(#fg0)"/><path d="M0 0 H14 L12 6 L6 9 L0 8 Z" fill="#3e2c22"/><path d="M7 1 L13 1 L14 6 L10 8 Z" fill="#b58058"/><path d="M0 9 Q5 6 10 8 L16 12 L15 18 L0 18 Z" fill="#dc9a2c"/><path d="M2 11 Q6 9 9 11 L11 15 L4 17 Z" fill="#f2c252"/><path d="M9 6 L14 5 L24 10 L22 12 L12 10 Z" fill="#c48a5a"/><path d="M15 12 L30 10 L30 18 L14 18 Z" fill="#33466a"/><rect x="22" y="7" width="8" height="3.5" fill="#7f98b4"/></svg>
<div class="a" style="left:432.5px;top:339.70px;font-size:7.2px;line-height:12px;color:#555;-webkit-text-stroke:0.1px #555">自定义</div>
<svg class="a" style="left:468px;top:321px;filter:sepia(.3) brightness(1.05)" width="30" height="18" viewBox="0 0 30 18"><defs><linearGradient id="fg1" x1="0" y1="0" x2="1" y2="0"><stop offset="0" stop-color="#5a3f2c"/><stop offset="0.45" stop-color="#9b7e66"/><stop offset="0.7" stop-color="#c3ccd6"/><stop offset="1" stop-color="#d0dae6"/></linearGradient></defs><rect width="30" height="18" fill="url(#fg1)"/><path d="M0 0 H14 L12 6 L6 9 L0 8 Z" fill="#3e2c22"/><path d="M7 1 L13 1 L14 6 L10 8 Z" fill="#b58058"/><path d="M0 9 Q5 6 10 8 L16 12 L15 18 L0 18 Z" fill="#dc9a2c"/><path d="M2 11 Q6 9 9 11 L11 15 L4 17 Z" fill="#f2c252"/><path d="M9 6 L14 5 L24 10 L22 12 L12 10 Z" fill="#c48a5a"/><path d="M15 12 L30 10 L30 18 L14 18 Z" fill="#33466a"/><rect x="22" y="7" width="8" height="3.5" fill="#7f98b4"/></svg>
<div class="a" style="left:468.5px;top:339.70px;font-size:7.2px;line-height:12px;color:#555;-webkit-text-stroke:0.1px #555">怀旧</div>
<svg class="a" style="left:504px;top:321px;filter:saturate(1.2)" width="30" height="18" viewBox="0 0 30 18"><defs><linearGradient id="fg2" x1="0" y1="0" x2="1" y2="0"><stop offset="0" stop-color="#5a3f2c"/><stop offset="0.45" stop-color="#9b7e66"/><stop offset="0.7" stop-color="#c3ccd6"/><stop offset="1" stop-color="#d0dae6"/></linearGradient></defs><rect width="30" height="18" fill="url(#fg2)"/><path d="M0 0 H14 L12 6 L6 9 L0 8 Z" fill="#3e2c22"/><path d="M7 1 L13 1 L14 6 L10 8 Z" fill="#b58058"/><path d="M0 9 Q5 6 10 8 L16 12 L15 18 L0 18 Z" fill="#dc9a2c"/><path d="M2 11 Q6 9 9 11 L11 15 L4 17 Z" fill="#f2c252"/><path d="M9 6 L14 5 L24 10 L22 12 L12 10 Z" fill="#c48a5a"/><path d="M15 12 L30 10 L30 18 L14 18 Z" fill="#33466a"/><rect x="22" y="7" width="8" height="3.5" fill="#7f98b4"/></svg>
<div class="a" style="left:504.5px;top:339.70px;font-size:7.2px;line-height:12px;color:#555;-webkit-text-stroke:0.1px #555">暖色</div>
<svg class="a" style="left:540px;top:321px;filter:brightness(1.08) saturate(.9)" width="30" height="18" viewBox="0 0 30 18"><defs><linearGradient id="fg3" x1="0" y1="0" x2="1" y2="0"><stop offset="0" stop-color="#5a3f2c"/><stop offset="0.45" stop-color="#9b7e66"/><stop offset="0.7" stop-color="#c3ccd6"/><stop offset="1" stop-color="#d0dae6"/></linearGradient></defs><rect width="30" height="18" fill="url(#fg3)"/><path d="M0 0 H14 L12 6 L6 9 L0 8 Z" fill="#3e2c22"/><path d="M7 1 L13 1 L14 6 L10 8 Z" fill="#b58058"/><path d="M0 9 Q5 6 10 8 L16 12 L15 18 L0 18 Z" fill="#dc9a2c"/><path d="M2 11 Q6 9 9 11 L11 15 L4 17 Z" fill="#f2c252"/><path d="M9 6 L14 5 L24 10 L22 12 L12 10 Z" fill="#c48a5a"/><path d="M15 12 L30 10 L30 18 L14 18 Z" fill="#33466a"/><rect x="22" y="7" width="8" height="3.5" fill="#7f98b4"/></svg>
<div class="a" style="left:540.5px;top:339.70px;font-size:7.2px;line-height:12px;color:#555;-webkit-text-stroke:0.1px #555">清透</div>
<svg class="a" style="left:432px;top:356px;filter:hue-rotate(-8deg) saturate(1.1)" width="30" height="18" viewBox="0 0 30 18"><defs><linearGradient id="fg4" x1="0" y1="0" x2="1" y2="0"><stop offset="0" stop-color="#5a3f2c"/><stop offset="0.45" stop-color="#9b7e66"/><stop offset="0.7" stop-color="#c3ccd6"/><stop offset="1" stop-color="#d0dae6"/></linearGradient></defs><rect width="30" height="18" fill="url(#fg4)"/><path d="M0 0 H14 L12 6 L6 9 L0 8 Z" fill="#3e2c22"/><path d="M7 1 L13 1 L14 6 L10 8 Z" fill="#b58058"/><path d="M0 9 Q5 6 10 8 L16 12 L15 18 L0 18 Z" fill="#dc9a2c"/><path d="M2 11 Q6 9 9 11 L11 15 L4 17 Z" fill="#f2c252"/><path d="M9 6 L14 5 L24 10 L22 12 L12 10 Z" fill="#c48a5a"/><path d="M15 12 L30 10 L30 18 L14 18 Z" fill="#33466a"/><rect x="22" y="7" width="8" height="3.5" fill="#7f98b4"/></svg>
<div class="a" style="left:432.5px;top:374.70px;font-size:7.2px;line-height:12px;color:#555;-webkit-text-stroke:0.1px #555">老友记</div>
<svg class="a" style="left:468px;top:356px;filter:brightness(1.12) saturate(.75)" width="30" height="18" viewBox="0 0 30 18"><defs><linearGradient id="fg5" x1="0" y1="0" x2="1" y2="0"><stop offset="0" stop-color="#5a3f2c"/><stop offset="0.45" stop-color="#9b7e66"/><stop offset="0.7" stop-color="#c3ccd6"/><stop offset="1" stop-color="#d0dae6"/></linearGradient></defs><rect width="30" height="18" fill="url(#fg5)"/><path d="M0 0 H14 L12 6 L6 9 L0 8 Z" fill="#3e2c22"/><path d="M7 1 L13 1 L14 6 L10 8 Z" fill="#b58058"/><path d="M0 9 Q5 6 10 8 L16 12 L15 18 L0 18 Z" fill="#dc9a2c"/><path d="M2 11 Q6 9 9 11 L11 15 L4 17 Z" fill="#f2c252"/><path d="M9 6 L14 5 L24 10 L22 12 L12 10 Z" fill="#c48a5a"/><path d="M15 12 L30 10 L30 18 L14 18 Z" fill="#33466a"/><rect x="22" y="7" width="8" height="3.5" fill="#7f98b4"/></svg>
<div class="a" style="left:468.5px;top:374.70px;font-size:7.2px;line-height:12px;color:#555;-webkit-text-stroke:0.1px #555">日系</div>
<svg class="a" style="left:504px;top:356px;filter:saturate(1.3) contrast(1.05)" width="30" height="18" viewBox="0 0 30 18"><defs><linearGradient id="fg6" x1="0" y1="0" x2="1" y2="0"><stop offset="0" stop-color="#5a3f2c"/><stop offset="0.45" stop-color="#9b7e66"/><stop offset="0.7" stop-color="#c3ccd6"/><stop offset="1" stop-color="#d0dae6"/></linearGradient></defs><rect width="30" height="18" fill="url(#fg6)"/><path d="M0 0 H14 L12 6 L6 9 L0 8 Z" fill="#3e2c22"/><path d="M7 1 L13 1 L14 6 L10 8 Z" fill="#b58058"/><path d="M0 9 Q5 6 10 8 L16 12 L15 18 L0 18 Z" fill="#dc9a2c"/><path d="M2 11 Q6 9 9 11 L11 15 L4 17 Z" fill="#f2c252"/><path d="M9 6 L14 5 L24 10 L22 12 L12 10 Z" fill="#c48a5a"/><path d="M15 12 L30 10 L30 18 L14 18 Z" fill="#33466a"/><rect x="22" y="7" width="8" height="3.5" fill="#7f98b4"/></svg>
<div class="a" style="left:504.5px;top:374.70px;font-size:7.2px;line-height:12px;color:#555;-webkit-text-stroke:0.1px #555">港风</div>
<svg class="a" style="left:540px;top:356px;filter:grayscale(1) brightness(1.1)" width="30" height="18" viewBox="0 0 30 18"><defs><linearGradient id="fg7" x1="0" y1="0" x2="1" y2="0"><stop offset="0" stop-color="#5a3f2c"/><stop offset="0.45" stop-color="#9b7e66"/><stop offset="0.7" stop-color="#c3ccd6"/><stop offset="1" stop-color="#d0dae6"/></linearGradient></defs><rect width="30" height="18" fill="url(#fg7)"/><path d="M0 0 H14 L12 6 L6 9 L0 8 Z" fill="#3e2c22"/><path d="M7 1 L13 1 L14 6 L10 8 Z" fill="#b58058"/><path d="M0 9 Q5 6 10 8 L16 12 L15 18 L0 18 Z" fill="#dc9a2c"/><path d="M2 11 Q6 9 9 11 L11 15 L4 17 Z" fill="#f2c252"/><path d="M9 6 L14 5 L24 10 L22 12 L12 10 Z" fill="#c48a5a"/><path d="M15 12 L30 10 L30 18 L14 18 Z" fill="#33466a"/><rect x="22" y="7" width="8" height="3.5" fill="#7f98b4"/></svg>
<div class="a" style="left:540.5px;top:374.70px;font-size:7.2px;line-height:12px;color:#555;-webkit-text-stroke:0.1px #555">灰度</div>
<div class="a" style="left:429px;top:387.5px;width:150px;height:1px;background:#ededed;"></div>
<div class="a" style="left:532.5px;top:389px;width:25.5px;height:7px;border:1px solid #e4e4e4;border-top:none"></div>
<div class="a" style="left:434px;top:402px;width:8px;height:7.5px;border:1px solid #c8c8c8;background:#fff"></div>
<div class="a" style="left:445px;top:400.70px;font-size:7.2px;line-height:12px;color:#444;">应用到全部视频</div>
<div class="a" style="left:417px;top:421px;width:52px;height:18px;border:1px solid #dedede;background:#f7f7f7;border-radius:2px"></div>
<div class="a" style="left:436px;top:424.70px;font-size:7.2px;line-height:12px;color:#555;">重置</div>
<div class="a" style="left:475px;top:421px;width:43px;height:18px;border:1px solid #dedede;background:#f7f7f7;border-radius:2px"></div>
<div class="a" style="left:489px;top:424.70px;font-size:7.2px;line-height:12px;color:#555;">取消</div>
<div class="a" style="left:532px;top:420px;width:52px;height:19px;background:#1a78e8;border-radius:2px"></div>
<div class="a" style="left:551px;top:424.70px;font-size:7.2px;line-height:12px;color:#fff;-webkit-text-stroke:0">确定</div>
<div class="a" style="left:444.5px;top:406.5px;font-size:37px;line-height:48px;color:#8a8a8a;-webkit-text-stroke:1px #8a8a8a;opacity:.85;letter-spacing:0px;transform:scale(1.012,1.08);transform-origin:0 0">爬爬资源</div>
</body></html>
